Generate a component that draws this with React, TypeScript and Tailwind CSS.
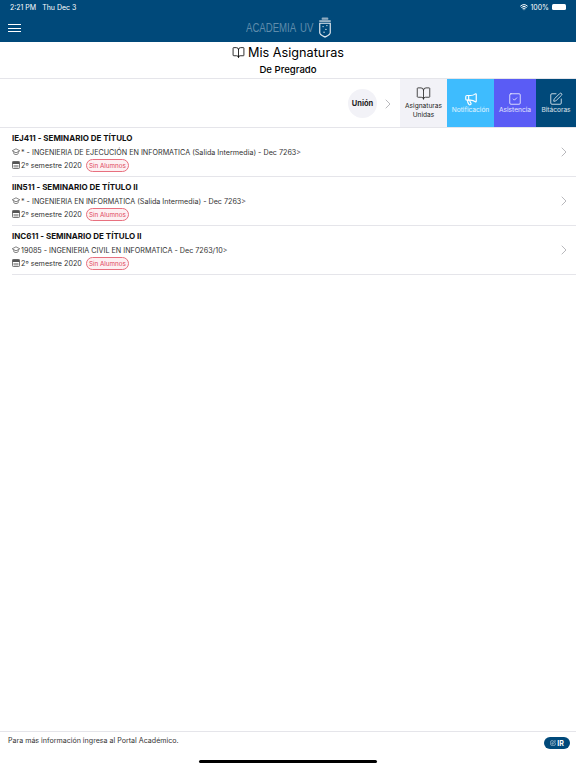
import { BookOpen, ChevronRight, Megaphone, SquareCheck, SquarePen, Wifi } from "lucide-react";

const courses = [
  { title: "IEJ411 - SEMINARIO DE TÍTULO", program: "* - INGENIERIA DE EJECUCIÓN EN INFORMATICA (Salida Intermedia) - Dec 7263>" },
  { title: "IIN511 - SEMINARIO DE TÍTULO II", program: "* - INGENIERIA EN INFORMATICA (Salida Intermedia) - Dec 7263>" },
  { title: "INC611 - SEMINARIO DE TÍTULO II", program: "19085 - INGENIERIA CIVIL EN INFORMATICA - Dec 7263/10>" },
];

const Shield = () => (
  <svg width="14" height="21" viewBox="0 0 14 22" className="ml-[4px]">
    <rect x="3.500" y="0.500" width="7" height="2.500" rx="1" fill="#8fabc0" />
    <rect x="1" y="3.500" width="12" height="1.500" fill="#c5d3de" />
    <path d="M1.500 6.500h11v10c0 2-2.500 3-5.500 4.500-3-1.500-5.500-2.500-5.500-4.500z" fill="#00497a" stroke="#e6ecf1" strokeWidth="1.200" />
    <circle cx="5" cy="10" r="0.700" fill="#e6ecf1" />
    <circle cx="9" cy="9" r="0.700" fill="#e6ecf1" />
    <circle cx="8" cy="13" r="0.700" fill="#e6ecf1" />
    <circle cx="6" cy="16" r="0.700" fill="#e6ecf1" />
  </svg>
);

// tiny solid icons used in the course rows
const CapIcon = () => (
  <svg width="8" height="8" viewBox="0 0 8 8" className="shrink-0 -mt-[2px]">
    <path d="M4 .8 7.800 2.800 4 4.800 .2 2.800z" fill="none" stroke="#666" strokeWidth="0.800" />
    <path d="M1.800 4v1.800c1.200 1 3.200 1 4.400 0V4" fill="none" stroke="#666" strokeWidth="0.800" />
  </svg>
);

const CalendarIcon = () => (
  <svg width="8" height="8" viewBox="0 0 8 8" className="shrink-0 -mt-[2px]">
    <rect x="0.500" y="0.500" width="7" height="7" rx="0.800" fill="none" stroke="#555" strokeWidth="0.800" />
    <rect x="0.500" y="0.500" width="7" height="2.500" fill="#555" />
    <rect x="1.500" y="4" width="5" height="2.500" fill="#aaa" />
  </svg>
);

const CourseRow = ({ title, program }: { title: string; program: string }) => (
  <div className="ml-3 h-[49px] flex items-center border-b border-[#e5e5ea]">
    <div className="flex-1">
      <div className="text-[8px] font-bold leading-[12px] text-[#111]">{title}</div>
      <div className="mt-[3px] flex items-center text-[7.200px] leading-[12px] text-[#333] h-[12px]">
        <CapIcon />
        <span className="ml-[1px]">{program}</span>
      </div>
      <div className="flex items-center text-[7.200px] leading-[12px] text-[#333]">
        <CalendarIcon />
        <span className="ml-[1px]">2º semestre 2020</span>
        <span className="ml-[4px] w-[43px] h-[13px] flex items-center justify-center rounded-full border border-[#e8707f] bg-[#fdf0f2] text-[6.300px] text-[#e0455a]">Sin Alumnos</span>
      </div>
    </div>
    <ChevronRight className="w-[16px] h-[16px] mr-[4px] text-[#b9b9bd]" strokeWidth={1.500} />
  </div>
);

const App = () => {
  return (
    <div className="w-[576px] h-[768px] bg-white flex flex-col font-['Inter','Liberation_Sans',sans-serif] text-black overflow-hidden relative">
      <header className="h-[42px] bg-[#00497a] text-white shrink-0 flex flex-col">
        <div className="h-[14px] px-[10px] flex items-center justify-between text-[7px] leading-none">
          <div className="flex gap-[6px]">
            <span>2:21 PM</span>
            <span>Thu Dec 3</span>
          </div>
          <div className="flex items-center gap-[2px]">
            <Wifi className="w-[8px] h-[8px]" strokeWidth={3} />
            <span>100%</span>
            <div className="w-[14px] h-[6px] rounded-[1.500px] bg-white ml-[1px]" />
          </div>
        </div>
        <div className="flex-1 relative flex items-center justify-center">
          <div className="absolute left-[8px] top-[10px] w-[13px] flex flex-col gap-[2.500px]">
            <div className="h-[1px] bg-white" />
            <div className="h-[1px] bg-white" />
            <div className="h-[1px] bg-white" />
          </div>
          <div className="flex items-center -mt-[1px] pl-[1px]">
            <span className="text-[12px] text-[#5f8cab] font-['Liberation_Sans',sans-serif] scale-x-[0.8] origin-left w-[53px] whitespace-nowrap">ACADEMIA</span>
            <span className="ml-[1px] text-[12px] text-[#5f8cab] font-['Liberation_Sans',sans-serif] scale-x-[0.8] origin-left w-[14px]">UV</span>
            <Shield />
          </div>
        </div>
      </header>

      <div className="h-[37px] shrink-0 flex flex-col items-center border-b border-[#e5e5ea]">
        <div className="flex items-center gap-[3px] mt-[2px] h-[17px]">
          <BookOpen className="w-[13px] h-[13px]" strokeWidth={1.500} />
          <span className="text-[12.700px] leading-[17px]">Mis Asignaturas</span>
        </div>
        <span className="text-[9.600px] font-medium leading-[13px] mt-[2px]">De Pregrado</span>
      </div>

      <div className="h-[49px] shrink-0 flex justify-end border-b border-[#e5e5ea]">
        <div className="flex items-center mr-[4px] pt-[1px]">
          <div className="w-[29px] h-[29px] rounded-full bg-[#f2f2f7] flex items-center justify-center text-[7.500px] font-bold text-[#222]">Unión</div>
          <ChevronRight className="ml-[3px] w-[16px] h-[16px] text-[#b9b9bd]" strokeWidth={1.500} />
        </div>
        <div className="w-[47px] bg-[#f2f2f7] flex flex-col items-center justify-center text-[#222]">
          <BookOpen className="w-[15px] h-[15px]" strokeWidth={1.300} />
          <span className="text-[6.600px] leading-[9px] text-center mt-[1px]">Asignaturas<br />Unidas</span>
        </div>
        <div className="w-[47px] bg-[#3ebcfe] flex flex-col items-center justify-center text-white pt-[1px]">
          <Megaphone className="w-[14px] h-[14px]" strokeWidth={2} />
          <span className="text-[6.600px] leading-[9px] text-white/85">Notificación</span>
        </div>
        <div className="w-[42px] bg-[#5a5cf5] flex flex-col items-center justify-center text-white pt-[1px]">
          <SquareCheck className="w-[14px] h-[14px]" strokeWidth={1.300} />
          <span className="text-[6.600px] leading-[9px] text-white/85">Asistencia</span>
        </div>
        <div className="w-[40px] bg-[#00497a] flex flex-col items-center justify-center text-white pt-[1px]">
          <SquarePen className="w-[14px] h-[14px]" strokeWidth={1.300} />
          <span className="text-[6.600px] leading-[9px] text-white/85">Bitácoras</span>
        </div>
      </div>

      <div className="flex-1">
        {courses.map((course) => (
          <CourseRow key={course.title} title={course.title} program={course.program} />
        ))}
      </div>

      <footer className="h-[37px] shrink-0 border-t border-[#e5e5ea] flex justify-between px-[8px] pt-[3px] pr-[6px]">
        <span className="text-[7.100px] leading-[12px] text-[#333]">Para más información ingresa al Portal Académico.</span>
        <div className="w-[26px] h-[12px] mt-[2px] rounded-full bg-[#00497a] text-white flex items-center justify-center gap-[1px]">
          <SquarePen className="w-[6px] h-[6px]" />
          <span className="text-[7px] font-bold leading-none">IR</span>
        </div>
      </footer>
      <div className="absolute left-[199px] bottom-[5px] w-[178px] h-[3px] rounded-full bg-black" />
    </div>
  );
};

export default App;
